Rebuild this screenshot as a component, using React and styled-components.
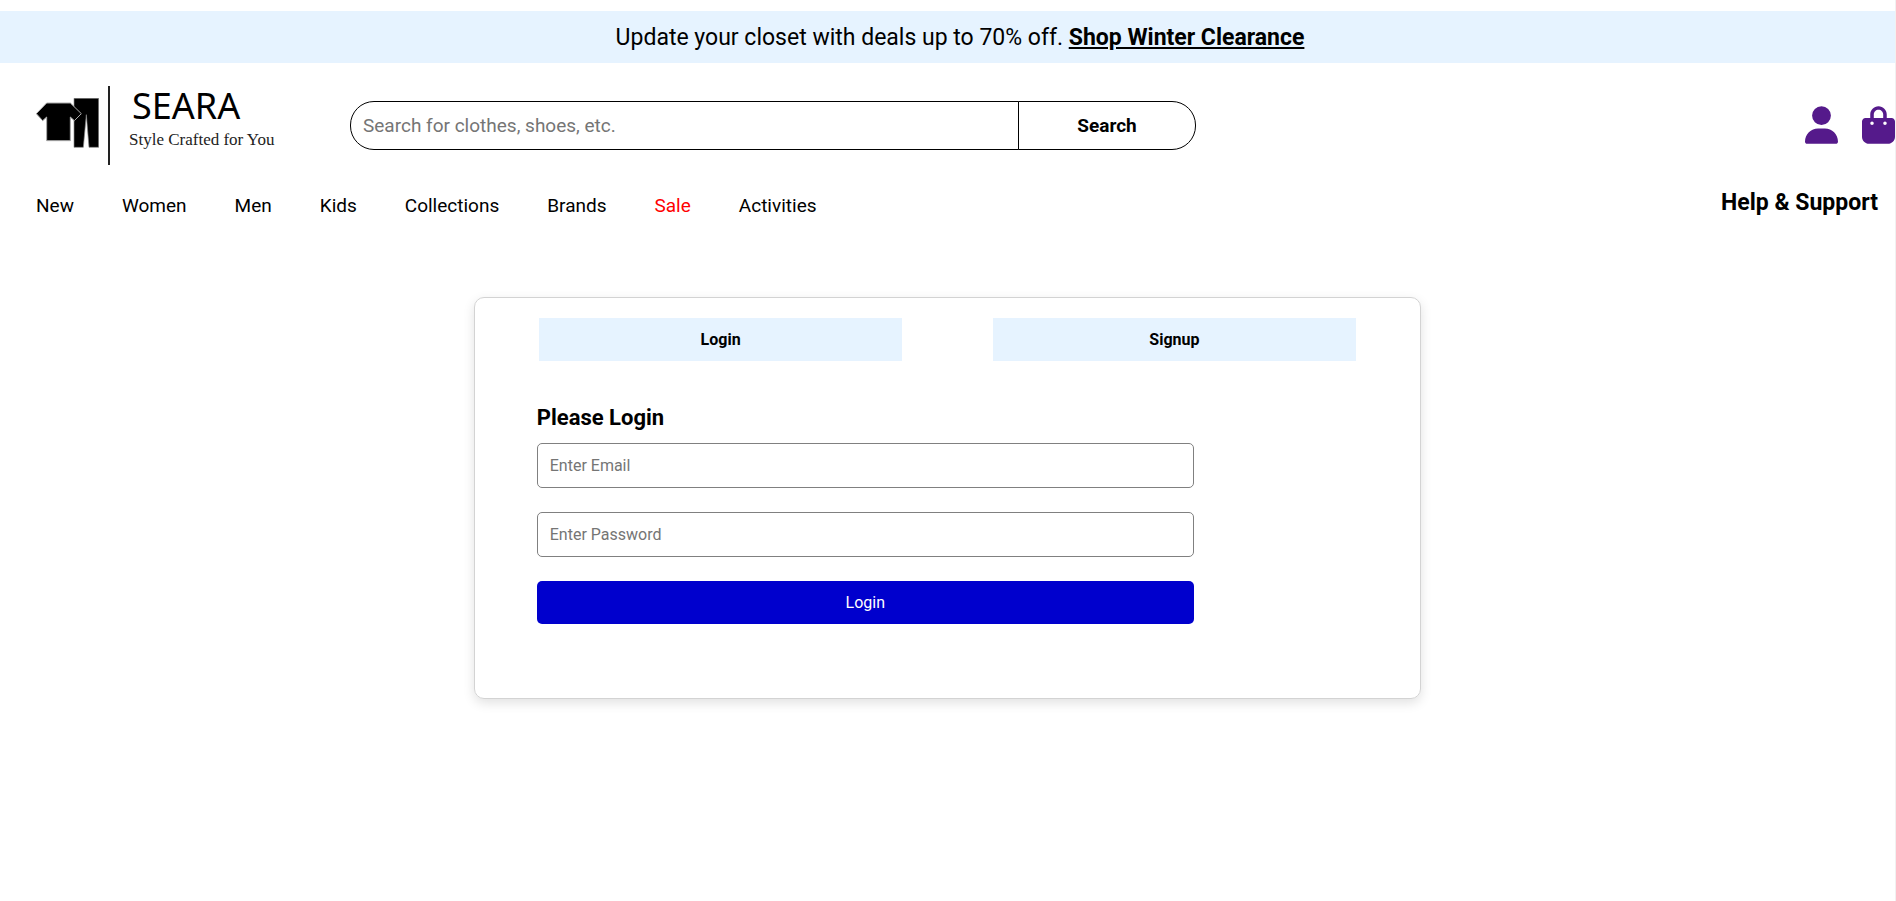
import React from 'react';
import styled, { createGlobalStyle } from 'styled-components';
import { FaUser, FaBagShopping } from 'react-icons/fa6';

const GlobalStyle = createGlobalStyle`
  *, *::before, *::after { box-sizing: border-box; }
  body {
    margin: 0;
    background: #fff;
    color: #000;
    font-family: Roboto, "Liberation Sans", sans-serif;
    font-size: 16px;
  }
  input, button { font-family: inherit; }
`;

const Page = styled.div`
  min-height: 100vh;
  padding-top: 11px;
  border-right: 1px solid #f1f1f1;
`;

const Banner = styled.p`
  margin: 0;
  padding: 13px 0 11px 25px;
  background: #e6f3ff;
  font-size: 23px;
  line-height: 28px;
  text-align: center;
`;

const BannerLink = styled.a`
  color: inherit;
  font-weight: 700;
`;

const TopRow = styled.div`
  display: flex;
  align-items: center;
  padding: 23px 0 0 36px;
`;

const Logo = styled.a`
  display: flex;
  flex: 0 0 314px;
  height: 79px;
  color: inherit;
  text-decoration: none;
`;

const LogoMark = styled.svg`
  width: 63px;
  height: 50px;
  margin-top: 12px;
`;

const LogoText = styled.span`
  display: flex;
  flex-direction: column;
  margin-left: 9px;
  padding-left: 19px;
  border-left: 2px solid #222;
`;

const LogoName = styled.span`
  padding-left: 3px;
  font-family: "Noto Sans", sans-serif;
  font-size: 36px;
  line-height: 40px;
`;

const LogoTagline = styled.span`
  font-family: "Liberation Serif", serif;
  font-size: 17px;
  line-height: 28px;
  color: #222;
`;

const SearchForm = styled.form`
  display: flex;
  flex: 0 1 846px;
  height: 49px;
`;

const SearchInput = styled.input`
  flex: 1;
  min-width: 0;
  padding: 0 12px;
  border: 1px solid #000;
  border-radius: 24px 0 0 24px;
  background: #fff;
  font-size: 19px;
  &::placeholder { color: #757575; }
`;

const SearchButton = styled.button`
  width: 178px;
  margin-left: -1px;
  border: 1px solid #000;
  border-radius: 0 24px 24px 0;
  background: #fff;
  color: #000;
  font-size: 19px;
  font-weight: 700;
`;

const Actions = styled.div`
  display: flex;
  gap: 24px;
  margin-left: auto;
  padding-bottom: 1px;
`;

const IconLink = styled.a`
  display: flex;
  color: #551a8b;
  font-size: 38px;
  svg { width: 33px; }
`;

const NavRow = styled.div`
  display: flex;
  justify-content: space-between;
  align-items: flex-start;
  padding: 26px 17px 0 36px;
`;

const Nav = styled.nav`
  display: flex;
  gap: 48px;
  padding-top: 3px;
`;

const NavLink = styled.a`
  color: ${({ $sale }) => ($sale ? '#f00' : '#000')};
  font-size: 19px;
  line-height: 24px;
  text-decoration: none;
`;

const HelpLink = styled.a`
  color: #000;
  font-size: 23px;
  font-weight: 700;
  line-height: 24px;
  text-decoration: none;
`;

const Card = styled.main`
  width: 50%;
  margin: 79px auto 0;
  padding: 20px 19px 74px;
  border: 1px solid #d3d3d3;
  border-radius: 10px;
  box-shadow: 0 4px 12px rgba(0, 0, 0, 0.12);
`;

const Tabs = styled.div`
  display: flex;
  justify-content: space-around;
`;

const Tab = styled.button`
  width: 40%;
  padding: 12px;
  border: 0;
  background: #e6f3ff;
  color: #000;
  font-size: 16px;
  font-weight: 700;
  line-height: 19px;
`;

const LoginForm = styled.form`
  display: flex;
  flex-direction: column;
  gap: 24px;
  width: 100%;
  max-width: 700px;
  padding: 44px 0 0 43px;
`;

const Title = styled.h2`
  margin: 0 0 -12px;
  font-size: 22px;
  line-height: 26px;
`;

const Field = styled.input`
  height: 45px;
  padding: 0 12px;
  border: 1px solid #808080;
  border-radius: 5px;
  background: #fff;
  font-size: 16px;
  &::placeholder { color: #757575; }
`;

const Submit = styled.button`
  padding: 12px;
  border: 0;
  border-radius: 5px;
  background: #0000cd;
  color: #fff;
  font-size: 16px;
  line-height: 19px;
`;

const links = ['New', 'Women', 'Men', 'Kids', 'Collections', 'Brands', 'Sale', 'Activities'];

export default function App() {
  return (
    <Page>
      <GlobalStyle />
      <Banner>
        Update your closet with deals up to 70% off.{' '}
        <BannerLink href="#clearance">Shop Winter Clearance</BannerLink>
      </Banner>
      <header>
        <TopRow>
          <Logo href="#home">
            <LogoMark viewBox="0 0 189 150" aria-hidden="true">
              <path d="M114 1H188V148H159L151 50L142 148H114Z" stroke="#888" strokeWidth="2" />
              <path
                d="M32 15H103L136 47L115 68L103 57V128H32V57L20 68L1 47Z"
                stroke="#aaa"
                strokeWidth="3"
              />
            </LogoMark>
            <LogoText>
              <LogoName>SEARA</LogoName>
              <LogoTagline>Style Crafted for You</LogoTagline>
            </LogoText>
          </Logo>
          <SearchForm role="search" onSubmit={(e) => e.preventDefault()}>
            <SearchInput
              type="text"
              aria-label="Search for clothes, shoes, etc."
              placeholder="Search for clothes, shoes, etc."
            />
            <SearchButton type="submit">Search</SearchButton>
          </SearchForm>
          <Actions>
            <IconLink href="#account" aria-label="Account"><FaUser /></IconLink>
            <IconLink href="#bag" aria-label="Shopping bag"><FaBagShopping /></IconLink>
          </Actions>
        </TopRow>
        <NavRow>
          <Nav>
            {links.map((name) => (
              <NavLink key={name} href={`#${name.toLowerCase()}`} $sale={name === 'Sale'}>
                {name}
              </NavLink>
            ))}
          </Nav>
          <HelpLink href="#help">Help &amp; Support</HelpLink>
        </NavRow>
      </header>
      <Card>
        <Tabs>
          <Tab type="button">Login</Tab>
          <Tab type="button">Signup</Tab>
        </Tabs>
        <LoginForm onSubmit={(e) => e.preventDefault()}>
          <Title>Please Login</Title>
          <Field type="email" aria-label="Email" placeholder="Enter Email" />
          <Field type="password" aria-label="Password" placeholder="Enter Password" />
          <Submit type="submit">Login</Submit>
        </LoginForm>
      </Card>
    </Page>
  );
}
